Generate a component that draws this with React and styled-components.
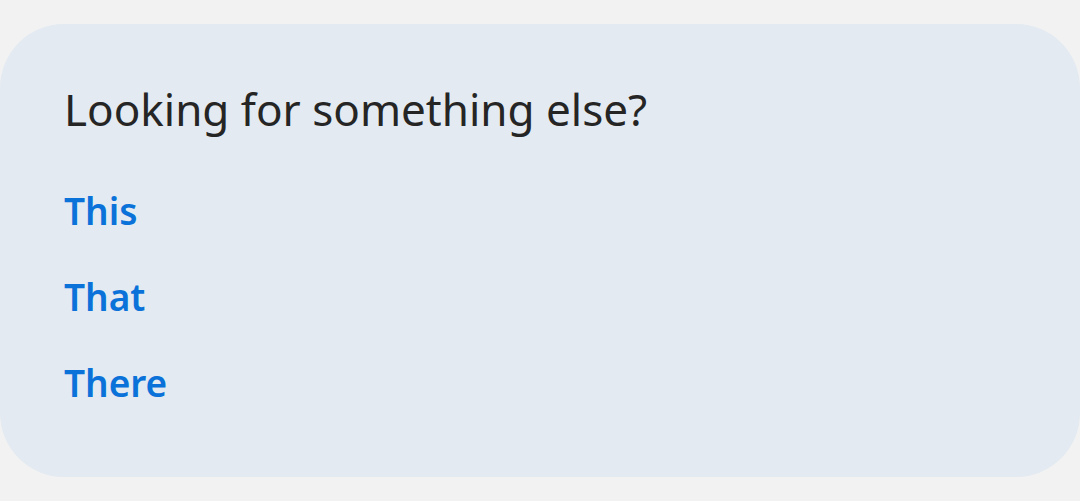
import React from 'react';
import styled, { createGlobalStyle } from 'styled-components';

const GlobalStyle = createGlobalStyle`
    html, body {
        margin: 0;
        padding: 0;
        background-color: #f2f2f2;
    }
`;

const Page = styled.div`
    padding-top: 24px;
    width: 1080px;
`;

const Card = styled.div`
    box-sizing: border-box;
    height: 453px;
    background-color: #e3eaf1;
    border-radius: 64px;
    padding: 57px 64px 0 64px;
    font-family: "Noto Sans", "Open Sans", sans-serif;
`;

const Heading = styled.h2`
    margin: 0 0 46px 0;
    font-size: 44px;
    font-weight: 400;
    line-height: 56px;
    color: #252525;
`;

const LinkList = styled.div`
    display: flex;
    flex-direction: column;
    gap: 30px;
`;

const Link = styled.a`
    font-size: 37px;
    font-weight: 600;
    line-height: 56px;
    color: #0b72d9;
    text-decoration: none;
`;

const links = ['This', 'That', 'There'];

const App = () => {
    return (
        <Page>
            <GlobalStyle />
            <Card>
                <Heading>Looking for something else?</Heading>
                <LinkList>
                    {links.map((l) => (
                        <Link key={l} href="#">{l}</Link>
                    ))}
                </LinkList>
            </Card>
        </Page>
    );
}

export default App;
